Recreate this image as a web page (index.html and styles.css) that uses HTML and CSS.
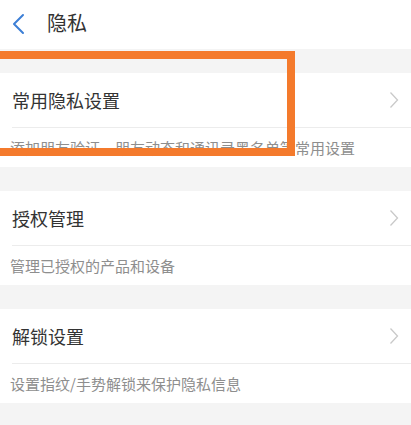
FILE: index.html
```html
<!DOCTYPE html>
<html lang="zh-CN">
<head>
<meta charset="UTF-8">
<meta name="viewport" content="width=device-width, initial-scale=1.0">
<title>隐私</title>
<link rel="stylesheet" href="styles.css">
</head>
<body>

  <div class="header">
    <svg class="back" width="16" height="22" viewBox="0 0 16 22">
      <path d="M12 2 L3 11 L12 20" fill="none" stroke="#3d7fd6" stroke-width="2" stroke-linecap="round" stroke-linejoin="round"/>
    </svg>
    <span class="title">隐私</span>
  </div>

  <div class="section">
    <div class="item-head">
      <span class="item-title">常用隐私设置</span>
      <svg class="arrow" width="10" height="18" viewBox="0 0 10 18"><path d="M1.5 1.5 L8.5 9 L1.5 16.5" fill="none" stroke="#c9c9c9" stroke-width="1.3"/></svg>
    </div>
    <div class="item-desc">添加朋友验证、朋友动态和通讯录黑名单等常用设置</div>
  </div>

  <div class="section">
    <div class="item-head">
      <span class="item-title">授权管理</span>
      <svg class="arrow" width="10" height="18" viewBox="0 0 10 18"><path d="M1.5 1.5 L8.5 9 L1.5 16.5" fill="none" stroke="#c9c9c9" stroke-width="1.3"/></svg>
    </div>
    <div class="item-desc">管理已授权的产品和设备</div>
  </div>

  <div class="section">
    <div class="item-head">
      <span class="item-title">解锁设置</span>
      <svg class="arrow" width="10" height="18" viewBox="0 0 10 18"><path d="M1.5 1.5 L8.5 9 L1.5 16.5" fill="none" stroke="#c9c9c9" stroke-width="1.3"/></svg>
    </div>
    <div class="item-desc">设置指纹/手势解锁来保护隐私信息</div>
  </div>

  <!-- highlight box drawn over the first item -->
  <div class="highlight"></div>

</body>
</html>
```

FILE: styles.css
```css
body {
  margin: 0;
  background-color: #f4f4f4;
  font-family: "Noto Sans CJK SC", "Noto Sans", sans-serif;
  color: #333;
  position: relative;
  overflow: hidden;
}

.header {
  height: 49px;
  background-color: #fff;
  display: flex;
  align-items: center;
  padding-left: 11px;
}
.header .back {
  margin-top: -2px;
}
.header .title {
  margin-left: 20px;
  font-size: 20px;
  line-height: 1;
  margin-top: -4px;
}

.section {
  background-color: #fff;
  margin-top: 24px;
}
.item-head {
  height: 54px;
  margin-left: 12px;
  padding-right: 12px;
  border-bottom: 1px solid #ececec;
  display: flex;
  align-items: center;
  justify-content: space-between;
}
.item-title {
  font-size: 18px;
  line-height: 1;
}
.item-desc {
  height: 39px;
  padding-left: 10px;
  display: flex;
  align-items: center;
  font-size: 15px;
  color: #8e8e8e;
}

.highlight {
  position: absolute;
  left: -10px;
  top: 51px;
  width: 305px;
  height: 105px;
  box-sizing: border-box;
  border: 8px solid #f47a2c;
}
```
